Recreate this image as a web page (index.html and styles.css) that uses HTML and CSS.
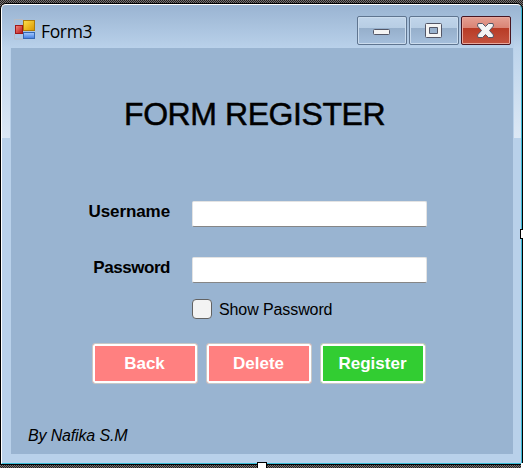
FILE: index.html
```html
<!DOCTYPE html>
<html lang="en">
<head>
<meta charset="utf-8">
<title>Form3</title>
<link rel="stylesheet" href="styles.css">
</head>
<body>
<div class="window">
  <header class="titlebar">
    <svg class="app-icon" width="21" height="21" viewBox="0 0 21 21">
      <defs>
        <linearGradient id="gold" x2="1" y2="1"><stop stop-color="#ffe04a"/><stop offset="1" stop-color="#d99500"/></linearGradient>
        <linearGradient id="red" x2="1" y2="1"><stop stop-color="#f58a80"/><stop offset="1" stop-color="#b51212"/></linearGradient>
        <linearGradient id="blue" x2="0" y2="1"><stop stop-color="#a9ccff"/><stop offset="1" stop-color="#3f7be0"/></linearGradient>
      </defs>
      <path d="M.5 5V.5H9M.5 15v5H9" fill="none" stroke="#b9bcc2"/>
      <rect x="9.500" y="1.500" width="11" height="10" fill="url(#gold)" stroke="#ac7b0a"/>
      <rect x="1.500" y="6.500" width="7" height="8" fill="url(#red)" stroke="#a01717"/>
      <rect x="9.500" y="13.500" width="11" height="6" fill="url(#blue)" stroke="#3568b4"/>
    </svg>
    <span class="caption">Form3</span>
    <div class="controls">
      <button class="control" aria-label="Minimize"><svg width="50" height="29"><rect x="16.500" y="13.500" width="16" height="5" rx="1" fill="#f4f4f4" stroke="#535666"/></svg></button>
      <button class="control" aria-label="Maximize"><svg width="50" height="29"><path fill-rule="evenodd" d="M17.500 7.500h14q1 0 1 1v12q0 1-1 1h-14q-1 0-1-1v-12q0-1 1-1zM20.500 11.500v6h8v-6z" fill="#f4f4f4" stroke="#535666"/></svg></button>
      <button class="control close" aria-label="Close"><svg width="50" height="29"><path d="M17 7.500h4.500l3 3 3-3H32l.5 2.500-4 4.500 4 4.500-.5 2.500h-4.500l-3-3-3 3H17l-.5-2.500 4-4.500-4-4.500z" fill="#f4f4f4" stroke="#535666" stroke-linejoin="round"/></svg></button>
    </div>
  </header>
  <main class="form">
    <h1>FORM REGISTER</h1>
    <div class="fields">
      <label for="user">Username</label><input id="user" type="text">
      <label class="tight" for="pass">Password</label><input id="pass" type="password">
    </div>
    <label class="show"><input type="checkbox"><span>Show Password</span></label>
    <div class="actions">
      <button>Back</button>
      <button>Delete</button>
      <button class="register">Register</button>
    </div>
    <footer>By Nafika S.M</footer>
  </main>
</div>
<i class="handle right"></i>
<i class="handle bottom"></i>
<i class="corner"></i>
</body>
</html>
```
FILE: styles.css
```css
* { box-sizing: border-box; }
html { height: 100%; }
body {
  position: relative;
  height: 468px;
  margin: 0;
  padding: 4px 1px;
  overflow: hidden;
  background: repeating-conic-gradient(#77716f 0 25%, #211f20 0 50%) 0 0 / 2px 2px;
  font-family: "Liberation Sans", Arial, sans-serif;
  color: #000;
}
.window {
  height: 460px;
  padding: 0 8px 0 9px;
  border: 1px solid;
  border-color: #fff #39b9d5 #39b9d5 #fff;
  border-radius: 5px 5px 0 0;
  box-shadow: 0 0 0 1px #000;
  background:
    linear-gradient(#b9d1ea00 12%, #dce8f5) 0 15px / 8px 118px no-repeat,
    linear-gradient(#b9d1ea00 12%, #dce8f5) 100% 15px / 7px 118px no-repeat,
    linear-gradient(#9ab4d2, #b9d1ea 43px);
}
.titlebar {
  display: flex;
  height: 43px;
  padding: 11px 2px 0 3px;
}
.app-icon { margin-top: 3px; }
.caption {
  margin: 2px 0 0 6px;
  font: 17.5px/26px "Open Sans", "Noto Sans", sans-serif;
  letter-spacing: -.35px;
}
.controls {
  display: flex;
  gap: 2px;
  margin-left: auto;
}
.control {
  width: 50px;
  height: 29px;
  padding: 0;
  border: 1px solid #5f7590;
  border-radius: 2px;
  box-shadow: inset 0 0 0 1px #cbdcee;
  background: linear-gradient(#c1d5ea, #b7cde4 41%, #96afcb 42%, #a5bfdc);
}
.control svg { display: block; margin: -1px; }
.close {
  border-color: #481521;
  box-shadow: inset 0 0 0 1px #e8a79c;
  background: linear-gradient(#e5a093, #d98374 41%, #b83b26 42%, #c4533f);
}
.form {
  display: flow-root;
  height: 406px;
  background: #99b4d1;
}
h1 {
  margin: 48px 0 0 113px;
  font-size: 32px;
  line-height: 36px;
  font-weight: 400;
  letter-spacing: -.42px;
  -webkit-text-stroke: .5px #000;
}
.fields {
  display: grid;
  grid-template-columns: 159px 235px;
  grid-auto-rows: 26px;
  gap: 30px 22px;
  margin-top: 21px;
  padding-top: 48px;
}
.fields label {
  font-size: 17px;
  line-height: 22px;
  font-weight: 700;
  text-align: right;
  letter-spacing: -.1px;
}
.fields .tight { letter-spacing: -.45px; }
.fields input {
  width: 235px;
  height: 26px;
  padding: 2px 5px;
  border: 1px solid #e3e3e3;
  border-bottom-color: #868686;
  border-radius: 2px;
  background: #fff;
}
.show {
  display: flex;
  gap: 7px;
  height: 20px;
  margin: 16px 0 0 181px;
  font-size: 16px;
  line-height: 21px;
  letter-spacing: -.1px;
}
.show input {
  appearance: none;
  width: 20px;
  height: 20px;
  margin: 0;
  border: 1px solid #626262;
  border-radius: 4px;
  background: #f3f3f3;
}
.actions {
  display: flex;
  gap: 8px;
  margin: 24px 0 0 81px;
}
.actions button {
  width: 106px;
  height: 41px;
  padding: 0 1px 0 0;
  border: 1px solid #c9c9c7;
  border-radius: 3px;
  box-shadow: inset 0 0 0 2px #fff;
  background: #ff8080;
  font: 700 17px "Liberation Sans", Arial, sans-serif;
  color: #fff;
}
.actions .register { background: #32cd32; }
footer {
  margin: 43px 0 0 17px;
  font-size: 16px;
  line-height: 18px;
  font-style: italic;
  letter-spacing: -.15px;
}
.handle {
  position: absolute;
  width: 8px;
  height: 8px;
  background: #fff;
  box-shadow: 0 0 0 1px #000;
}
.right { left: 521px; top: 230px; }
.bottom { left: 258px; top: 463px; }
.corner {
  position: absolute;
  left: 521px;
  top: 463px;
  width: 2px;
  height: 5px;
  background: #fff;
}
```
